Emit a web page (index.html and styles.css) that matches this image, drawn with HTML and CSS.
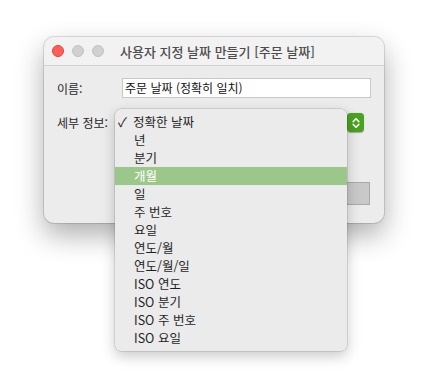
FILE: index.html
```html
<!DOCTYPE html>
<html lang="ko">
<head>
  <meta charset="UTF-8" />
  <meta name="viewport" content="width=device-width, initial-scale=1.0" />
  <title>사용자 지정 날짜 만들기</title>
  <link rel="stylesheet" href="styles.css">
</head>
<body>
  <div class="window">
    <div class="titlebar">
      <div class="lights">
        <span class="light red"></span>
        <span class="light"></span>
        <span class="light"></span>
      </div>
      <div class="title">사용자 지정 날짜 만들기 [주문 날짜]</div>
    </div>

    <div class="content">
      <div class="row">
        <label class="label">이름:</label>
        <div class="field">주문 날짜 (정확히 일치)</div>
      </div>

      <div class="row row-detail">
        <label class="label">세부 정보:</label>
        <div class="popup">
          <span class="stepper">
            <svg width="8" height="12" viewBox="0 0 8 12">
              <path d="M1.2 4.6 L4 1.8 L6.8 4.6 M1.2 7.4 L4 10.2 L6.8 7.4" fill="none" stroke="#fff" stroke-width="1.6" stroke-linecap="round" stroke-linejoin="round"/>
            </svg>
          </span>
        </div>

        <ul class="menu">
          <li class="checked"><span class="check">✓</span>정확한 날짜</li>
          <li>년</li>
          <li>분기</li>
          <li class="active">개월</li>
          <li>일</li>
          <li>주 번호</li>
          <li>요일</li>
          <li>연도/월</li>
          <li>연도/월/일</li>
          <li>ISO 연도</li>
          <li>ISO 분기</li>
          <li>ISO 주 번호</li>
          <li>ISO 요일</li>
        </ul>
      </div>

      <div class="actions">
        <button class="btn"></button>
      </div>
    </div>
  </div>
</body>
</html>
```

FILE: styles.css
```css
* {
  margin: 0;
  padding: 0;
  box-sizing: border-box;
}

html,
body {
  min-height: 374px;
}

body {
  font-family: "Noto Sans CJK KR", "Noto Sans", sans-serif;
  font-size: 12px;
  color: #222;
  background: #ffffff;
  padding: 37px 0 0 44px;
}

.window {
  width: 340px;
  height: 186px;
  background: #ececec;
  border-radius: 10px;
  box-shadow: 0 0 0 1px rgba(0, 0, 0, 0.12),
              0 12px 28px rgba(0, 0, 0, 0.32);
}

.titlebar {
  height: 29px;
  display: flex;
  align-items: center;
  background: #f2f2f2;
  border-bottom: 1px solid #d2d2d2;
  border-radius: 10px 10px 0 0;
}

.lights {
  display: flex;
  gap: 8px;
  padding-left: 8px;
}

.light {
  width: 12px;
  height: 12px;
  border-radius: 50%;
  background: #d0d0d0;
  border: 0.5px solid #c2c2c2;
}

.light.red {
  background: #fe5f57;
  border-color: #e0443e;
}

.title {
  flex: 1;
  padding-left: 16px;
  font-size: 13px;
  font-weight: 500;
  color: #4d4d4d;
}

.content {
  padding: 12px 13px 0 13px;
}

.row {
  display: flex;
  align-items: center;
}

.label {
  width: 65px;
  color: #262626;
}

.field {
  width: 249px;
  height: 20px;
  padding-left: 2px;
  line-height: 18px;
  background: #fff;
  border: 1px solid #c8c8c8;
  color: #111;
}

.row-detail {
  position: relative;
  margin-top: 15px;
}

.popup {
  width: 242px;
  height: 19px;
  display: flex;
  justify-content: flex-end;
}

.stepper {
  width: 17px;
  height: 19px;
  border-radius: 4px;
  background: #4aa31f;
  display: flex;
  align-items: center;
  justify-content: center;
  box-shadow: 0 0.5px 1px rgba(0, 0, 0, 0.3);
}

.menu {
  position: absolute;
  left: 58px;
  top: -4px;
  width: 232px;
  list-style: none;
  padding: 4px 0;
  background: #ebebeb;
  border-radius: 6px;
  box-shadow: 0 0 0 0.5px rgba(0, 0, 0, 0.2),
              0 5px 14px rgba(0, 0, 0, 0.22);
  z-index: 10;
}

.menu li {
  height: 18px;
  line-height: 18px;
  padding-left: 19px;
  font-size: 12.5px;
  color: #1f1f1f;
}

.menu li.checked {
  padding-left: 3px;
}

.check {
  display: inline-block;
  width: 15px;
  font-size: 13px;
}

.menu li.active {
  background: #9cc78b;
  color: #fff;
}

.actions {
  display: flex;
  justify-content: flex-end;
  margin-top: 50px;
  padding-right: 1px;
}

.btn {
  width: 80px;
  height: 23px;
  background: #c9c9c9;
  border: 1px solid #a9a9a9;
}
```
